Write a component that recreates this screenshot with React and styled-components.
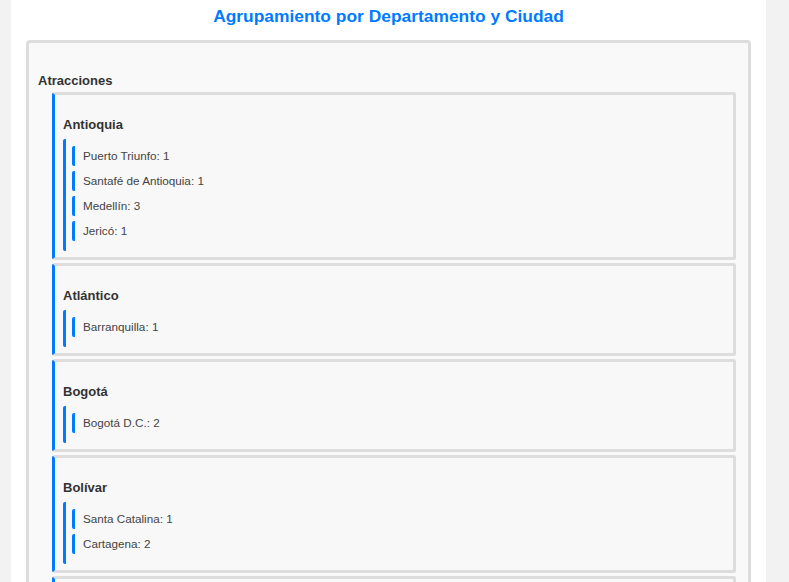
import styled, { createGlobalStyle } from 'styled-components';

const GlobalStyle = createGlobalStyle`
  html, body {
    margin: 0;
    padding: 0;
    background: #f2f2f2;
    font-family: "Liberation Sans", Arial, sans-serif;
  }
`;

const Page = styled.div`
  padding: 0 23px 0 11px;
`;

const Card = styled.div`
  background: #ffffff;
  padding: 6px 15px 20px;
  min-height: 600px;
`;

const Title = styled.h2`
  margin: 0 0 13px;
  text-align: center;
  color: #007bff;
  font-size: 17.4px;
  line-height: 21px;
  font-weight: bold;
`;

const GroupBox = styled.div`
  background: #f9f9f9;
  border: 3px solid #dddddd;
  border-radius: 4px;
  padding: 29px 12px 10px 9px;
`;

const CategoryTitle = styled.h3`
  margin: 0 0 3px;
  font-size: 13px;
  line-height: 17px;
  font-weight: bold;
  color: #333333;
`;

const DeptList = styled.div`
  display: flex;
  flex-direction: column;
  gap: 3px;
  margin-left: 14px;
`;

const DeptCard = styled.div`
  background: #f8f8f8;
  border: 3px solid #dddddd;
  border-left-color: #007bff;
  border-radius: 3px;
  padding: 21px 8px 6px;
`;

const DeptName = styled.h4`
  margin: 0 0 6px;
  font-size: 13px;
  line-height: 17px;
  font-weight: bold;
  color: #333333;
`;

const CityList = styled.ul`
  list-style: none;
  margin: 0;
  padding: 7px 0 10px 6px;
  border-left: 3px solid #007bff;
  border-radius: 2px;
  display: flex;
  flex-direction: column;
  gap: 5px;
`;

const CityItem = styled.li`
  height: 20px;
  line-height: 20px;
  padding-left: 8px;
  border-left: 3px solid #007bff;
  border-radius: 2px;
  font-size: 11.7px;
  color: #444444;
`;

const data = [
  {
    name: 'Antioquia',
    cities: [
      ['Puerto Triunfo', 1],
      ['Santafé de Antioquia', 1],
      ['Medellín', 3],
      ['Jericó', 1],
    ],
  },
  { name: 'Atlántico', cities: [['Barranquilla', 1]] },
  { name: 'Bogotá', cities: [['Bogotá D.C.', 2]] },
  {
    name: 'Bolívar',
    cities: [
      ['Santa Catalina', 1],
      ['Cartagena', 2],
    ],
  },
  { name: 'Boyacá', cities: [['Villa de Leyva', 1]] },
];

export default function App() {
  return (
    <Page>
      <GlobalStyle />
      <Card>
        <Title>Agrupamiento por Departamento y Ciudad</Title>
        <GroupBox>
          <CategoryTitle>Atracciones</CategoryTitle>
          <DeptList>
            {data.map(dept => (
              <DeptCard key={dept.name}>
                <DeptName>{dept.name}</DeptName>
                <CityList>
                  {dept.cities.map(([city, count]) => (
                    <CityItem key={city}>
                      {city}: {count}
                    </CityItem>
                  ))}
                </CityList>
              </DeptCard>
            ))}
          </DeptList>
        </GroupBox>
      </Card>
    </Page>
  );
}
